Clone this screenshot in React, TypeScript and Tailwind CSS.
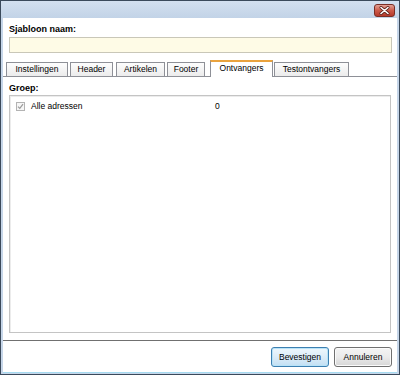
import React from 'react';

const tabs = [
  { label: 'Instellingen', w: 'w-[62px]', ml: 'ml-0' },
  { label: 'Header', w: 'w-[43px]', ml: 'ml-[2px]' },
  { label: 'Artikelen', w: 'w-[49px]', ml: 'ml-[3px]' },
  { label: 'Footer', w: 'w-[38px]', ml: 'ml-[2px]' },
  { label: 'Ontvangers', w: 'w-[63px]', ml: 'ml-[5px]', active: true },
  { label: 'Testontvangers', w: 'w-[75px]', ml: 'ml-px' }
];

function CloseButton() {
  return (
    <div className="w-[21px] h-[13px] rounded-[3px] border border-[#7a2e25] bg-linear-to-b from-[#e3a196] via-[#cc5a49] to-[#b5392b] flex items-center justify-center">
      <svg width="11" height="9" viewBox="0 0 11 9">
        <path d="M2 1.5 L9 7.5 M9 1.5 L2 7.5" stroke="#5b2019" strokeWidth="3" strokeLinecap="round" />
        <path d="M2 1.5 L9 7.5 M9 1.5 L2 7.5" stroke="#ffffff" strokeWidth="1.6" strokeLinecap="round" />
      </svg>
    </div>
  );
}

function App() {
  return (
    <div className="w-[400px] h-[375px] border border-[#3b4a5b] bg-[#c6d6e9] flex flex-col font-['Liberation_Sans',Arial,sans-serif] text-black">
      {/* title bar */}
      <div className="h-[17px] flex items-start justify-end pr-[4px] pt-[3px] bg-linear-to-b from-[#d3e0ef] to-[#c2d3e7]">
        <CloseButton />
      </div>

      {/* body */}
      <div className="mx-[2px] h-[354px] bg-white flex flex-col">
        <p className="mt-[6px] ml-[6px] h-[11px] leading-[11px] text-[9px] font-bold">Sjabloon naam:</p>
        <div className="mt-[2px] ml-[6px] w-[383px] h-[16px] border border-[#c9c7b8] bg-[#fefbe6]" />

        {/* tabs */}
        <div className="mt-[7px] h-[17px] flex items-end pl-[3px] border-b border-[#8e9097]">
          {tabs.map((tab, index) =>
            tab.active ? (
              <div
                key={index}
                className={`${tab.w} ${tab.ml} relative z-10 -mb-px h-[17px] bg-white border border-b-0 border-[#8e9097] border-t-2 border-t-[#eaa33e] flex items-center justify-center text-[8.5px] leading-none pb-[2px]`}
              >
                {tab.label}
              </div>
            ) : (
              <div
                key={index}
                className={`${tab.w} ${tab.ml} h-[14px] border border-b-0 border-[#8e9097] bg-linear-to-b from-[#fdfdfd] to-[#ececec] flex items-center justify-center text-[8.5px] leading-none`}
              >
                {tab.label}
              </div>
            )
          )}
        </div>

        <p className="mt-[6px] ml-[6px] h-[11px] leading-[11px] text-[9px] font-bold">Groep:</p>

        {/* list */}
        <div className="mt-px ml-[6px] w-[382px] h-[238px] border border-[#c4c4c4] shadow-[inset_1px_1px_0_#ececec]">
          <div className="mt-[4px] pl-[6px] h-[13px] flex items-center text-[8.5px]">
            <div className="w-[9px] h-[9px] border border-[#b3b3b3] bg-[#f6f6f6] flex items-center justify-center">
              <svg width="7" height="7" viewBox="0 0 7 7">
                <path d="M1 3.6 L2.8 5.4 L6 1.2" stroke="#9a9a9a" strokeWidth="1.2" fill="none" />
              </svg>
            </div>
            <span className="ml-[6px] w-[184px]">Alle adressen</span>
            <span>0</span>
          </div>
        </div>

        <div className="mt-[7px] h-px bg-[#707070]" />

        {/* buttons */}
        <div className="mt-[6px] flex justify-end gap-[5px] pr-[5px]">
          <button className="w-[58px] h-[20px] rounded-[3px] border border-[#3c7fb1] bg-linear-to-b from-[#eef7fd] via-[#dcecf8] to-[#c2e0f4] shadow-[inset_0_0_0_1px_#b8e3f8] text-[8.5px] leading-none">
            Bevestigen
          </button>
          <button className="w-[58px] h-[20px] rounded-[3px] border border-[#707070] bg-linear-to-b from-[#f4f4f4] via-[#ebebeb] to-[#d6d6d6] shadow-[inset_0_0_0_1px_#fbfbfb] text-[8.5px] leading-none">
            Annuleren
          </button>
        </div>
      </div>

      {/* bottom frame */}
      <div className="mx-[2px] h-px bg-[#a6dbf1]" />
      <div className="h-px" />
    </div>
  );
}

export default App;
